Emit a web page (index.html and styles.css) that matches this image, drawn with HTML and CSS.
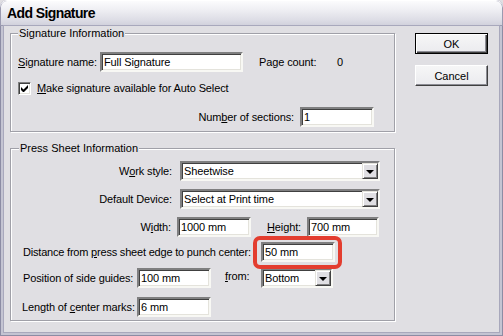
FILE: index.html
```html
<!DOCTYPE html>
<html lang="en">
<head>
    <meta charset="UTF-8">
    <title>Add Signature</title>
    <link rel="stylesheet" href="styles.css">
</head>
<body>
    <div class="window">
        <div class="titlebar">Add Signature</div>
        <div class="client">
            <div class="main">
                <div class="group group-sig">
                    <div class="group-title">Signature Information</div>
                    <div class="row row-name">
                        <span class="lbl lbl-name"><u>S</u>ignature name:</span>
                        <div class="field field-name">Full Signature</div>
                        <span class="page-count">Page count:</span>
                        <span class="page-num">0</span>
                    </div>
                    <div class="row row-check">
                        <span class="check">
                            <svg width="7" height="7" viewBox="0 0 7 7"><path d="M0 2v3l2 2h1l4-4V0L2.5 4.5z" fill="#000"/></svg>
                        </span>
                        <span class="lbl"><u>M</u>ake signature available for Auto Select</span>
                    </div>
                    <div class="row row-sections">
                        <span class="lbl">Num<u>b</u>er of sections:</span>
                        <div class="field field-short">1</div>
                    </div>
                </div>

                <div class="group group-press">
                    <div class="group-title">Press Sheet Information</div>
                    <div class="row row-select">
                        <span class="lbl lbl-col">W<u>o</u>rk style:</span>
                        <div class="field select select-wide">
                            <span class="select-text">Sheetwise</span>
                            <span class="drop"><i class="arrow"></i></span>
                        </div>
                    </div>
                    <div class="row row-select row-device">
                        <span class="lbl lbl-col">Default Device:</span>
                        <div class="field select select-wide">
                            <span class="select-text">Select at Print time</span>
                            <span class="drop"><i class="arrow"></i></span>
                        </div>
                    </div>
                    <div class="row row-size">
                        <span class="lbl lbl-width">W<u>i</u>dth:</span>
                        <div class="field field-short">1000 mm</div>
                        <span class="lbl lbl-height"><u>H</u>eight:</span>
                        <div class="field field-height">700 mm</div>
                    </div>
                    <div class="row row-distance">
                        <span class="lbl lbl-distance">Distance from <u>p</u>ress sheet edge to punch center:</span>
                        <div class="highlight">
                            <div class="field field-short">50 mm</div>
                        </div>
                    </div>
                    <div class="row row-guides">
                        <span class="lbl lbl-guides">Position of side <u>g</u>uides:</span>
                        <div class="field field-short">100 mm</div>
                        <span class="lbl lbl-from"><u>f</u>rom:</span>
                        <div class="field select select-small">
                            <span class="select-text">Bottom</span>
                            <span class="drop"><i class="arrow"></i></span>
                        </div>
                    </div>
                    <div class="row row-marks">
                        <span class="lbl lbl-marks">Length of <u>c</u>enter marks:</span>
                        <div class="field field-short">6 mm</div>
                    </div>
                </div>
            </div>

            <div class="buttons">
                <button class="btn btn-default">OK</button>
                <button class="btn">Cancel</button>
            </div>
        </div>
    </div>
</body>
</html>
```

FILE: styles.css
```css
* {
    margin: 0;
    padding: 0;
    box-sizing: border-box;
}

body {
    width: 503px;
    height: 336px;
    overflow: hidden;
    background: #e0dfe3;
    font-family: "Liberation Sans", Arial, sans-serif;
    font-size: 11px;
    letter-spacing: -0.12px;
    color: #000;
}

u {
    text-decoration: underline;
    text-underline-offset: 1px;
}

.window {
    width: 503px;
    height: 336px;
    display: flex;
    flex-direction: column;
    background: #c4c4d2;
    border-radius: 7px 7px 0 0;
    box-shadow: inset 0 0 0 1px #8c8ca4;
}

.titlebar {
    height: 26px;
    flex: none;
    padding: 5px 0 0 7px;
    border-radius: 7px 7px 0 0;
    background: linear-gradient(#fdfdfe, #f0f0f4 35%, #dedee6 75%, #cfcfdb);
    box-shadow: inset 0 1px 0 #fff, inset 0 0 0 1px #9a9ab0;
    font-size: 14px;
    font-weight: bold;
    letter-spacing: -0.6px;
    line-height: 17px;
}

.client {
    flex: 1;
    display: flex;
    margin: 0 4px 4px;
    padding: 7px 11px 0 6px;
    background: #e0dfe3;
    box-shadow: 0 0 0 1px #a8a8bc;
}

.main {
    width: 385px;
}

/* group boxes */
.group {
    border: 1px solid #a0a0a8;
    box-shadow: inset 1px 1px 0 #fff, 1px 1px 0 #fff;
    padding: 0 0 0 7px;
}

.group-title {
    width: fit-content;
    margin: -7px 0 0 0;
    padding: 0 1px;
    line-height: 13px;
    background: #e0dfe3;
    letter-spacing: 0;
}

.group-sig {
    padding-bottom: 4px;
}

.group-press {
    margin-top: 16px;
    padding-bottom: 3px;
}

.group-press .group-title {
    margin-left: 1px;
}

.row {
    display: flex;
    align-items: center;
    height: 20px;
}

.lbl {
    white-space: nowrap;
}

/* sunken fields */
.field {
    height: 20px;
    padding: 0 2px;
    line-height: 16px;
    background: #fff;
    border-style: solid;
    border-width: 2px;
    border-color: #7f7f80 #f8f8f4 #f8f8f4 #7f7f80;
    box-shadow: inset 1px 1px 0 #404040, inset -1px -1px 0 #e4e3dc;
    white-space: nowrap;
    overflow: hidden;
}

.field-short {
    width: 74px;
}

.row-name {
    margin-top: 12px;
}

.lbl-name {
    width: 82px;
}

.field-name {
    width: 143px;
}

.page-count {
    margin-left: 16px;
    width: 78px;
}

.row-check {
    margin-top: 6px;
}

.check {
    width: 13px;
    height: 13px;
    margin-right: 6px;
    display: flex;
    align-items: center;
    justify-content: center;
    background: #fff;
    border-style: solid;
    border-width: 1px;
    border-color: #7f7f80 #fff #fff #7f7f80;
    box-shadow: inset 1px 1px 0 #404040, inset -1px -1px 0 #e4e3dc;
}

.row-sections {
    margin-top: 9px;
    justify-content: flex-end;
    padding-right: 20px;
}

.row-sections .lbl {
    margin-right: 6px;
}

/* press sheet rows */
.row-select {
    margin-top: 6px;
}

.row-device {
    margin-top: 8px;
}

.lbl-col {
    width: 154px;
    margin-right: 8px;
    text-align: right;
}

.select {
    display: flex;
    align-items: center;
    padding: 0 0 0 2px;
}

.select-wide {
    width: 200px;
}

.select-small {
    width: 72px;
}

.select-text {
    flex: 1;
}

.drop {
    width: 16px;
    height: 16px;
    display: flex;
    align-items: center;
    justify-content: center;
    background: #e0dfe3;
    border-style: solid;
    border-width: 1px;
    border-color: #e4e3dc #404040 #404040 #e4e3dc;
    box-shadow: inset 1px 1px 0 #fff, inset -1px -1px 0 #808080;
}

.arrow {
    width: 0;
    height: 0;
    border-left: 4px solid transparent;
    border-right: 4px solid transparent;
    border-top: 4px solid #000;
    margin-top: 1px;
}

.row-size {
    margin-top: 8px;
}

.lbl-width {
    width: 153px;
    margin-right: 6px;
    text-align: right;
}

.lbl-height {
    width: 40px;
    margin-left: 16px;
}

.field-height {
    width: 72px;
}

.row-distance {
    margin-top: 5px;
}

.lbl-distance {
    width: 238px;
    margin-left: 5px;
    letter-spacing: -0.2px;
}

.highlight {
    position: relative;
}

.highlight::after {
    content: "";
    position: absolute;
    top: -6px;
    right: -7px;
    bottom: -7px;
    left: -8px;
    border: 4px solid #e33d2f;
    border-radius: 7px;
}

.row-guides {
    margin-top: 6px;
}

.lbl-guides {
    width: 114px;
    margin-left: 5px;
}

.lbl-from {
    width: 36px;
    margin-left: 14px;
    margin-top: -4px;
}

.row-marks {
    margin-top: 9px;
}

.lbl-marks {
    width: 115px;
    margin-left: 4px;
}

/* buttons */
.buttons {
    margin-left: 20px;
    display: flex;
    flex-direction: column;
    gap: 11px;
}

.btn {
    width: 73px;
    height: 21px;
    font-family: "Liberation Sans", Arial, sans-serif;
    font-size: 11px;
    color: #000;
    background: linear-gradient(#f6f6f7, #ebebee);
    border-style: solid;
    border-width: 1px;
    border-color: #fff #404040 #404040 #fff;
    box-shadow: inset -1px -1px 0 #8c8c94;
}

.btn-default {
    border-color: #000;
    box-shadow: inset 1px 1px 0 #fff, inset -1px -1px 0 #404040, inset -2px -2px 0 #8c8c94;
}
```
